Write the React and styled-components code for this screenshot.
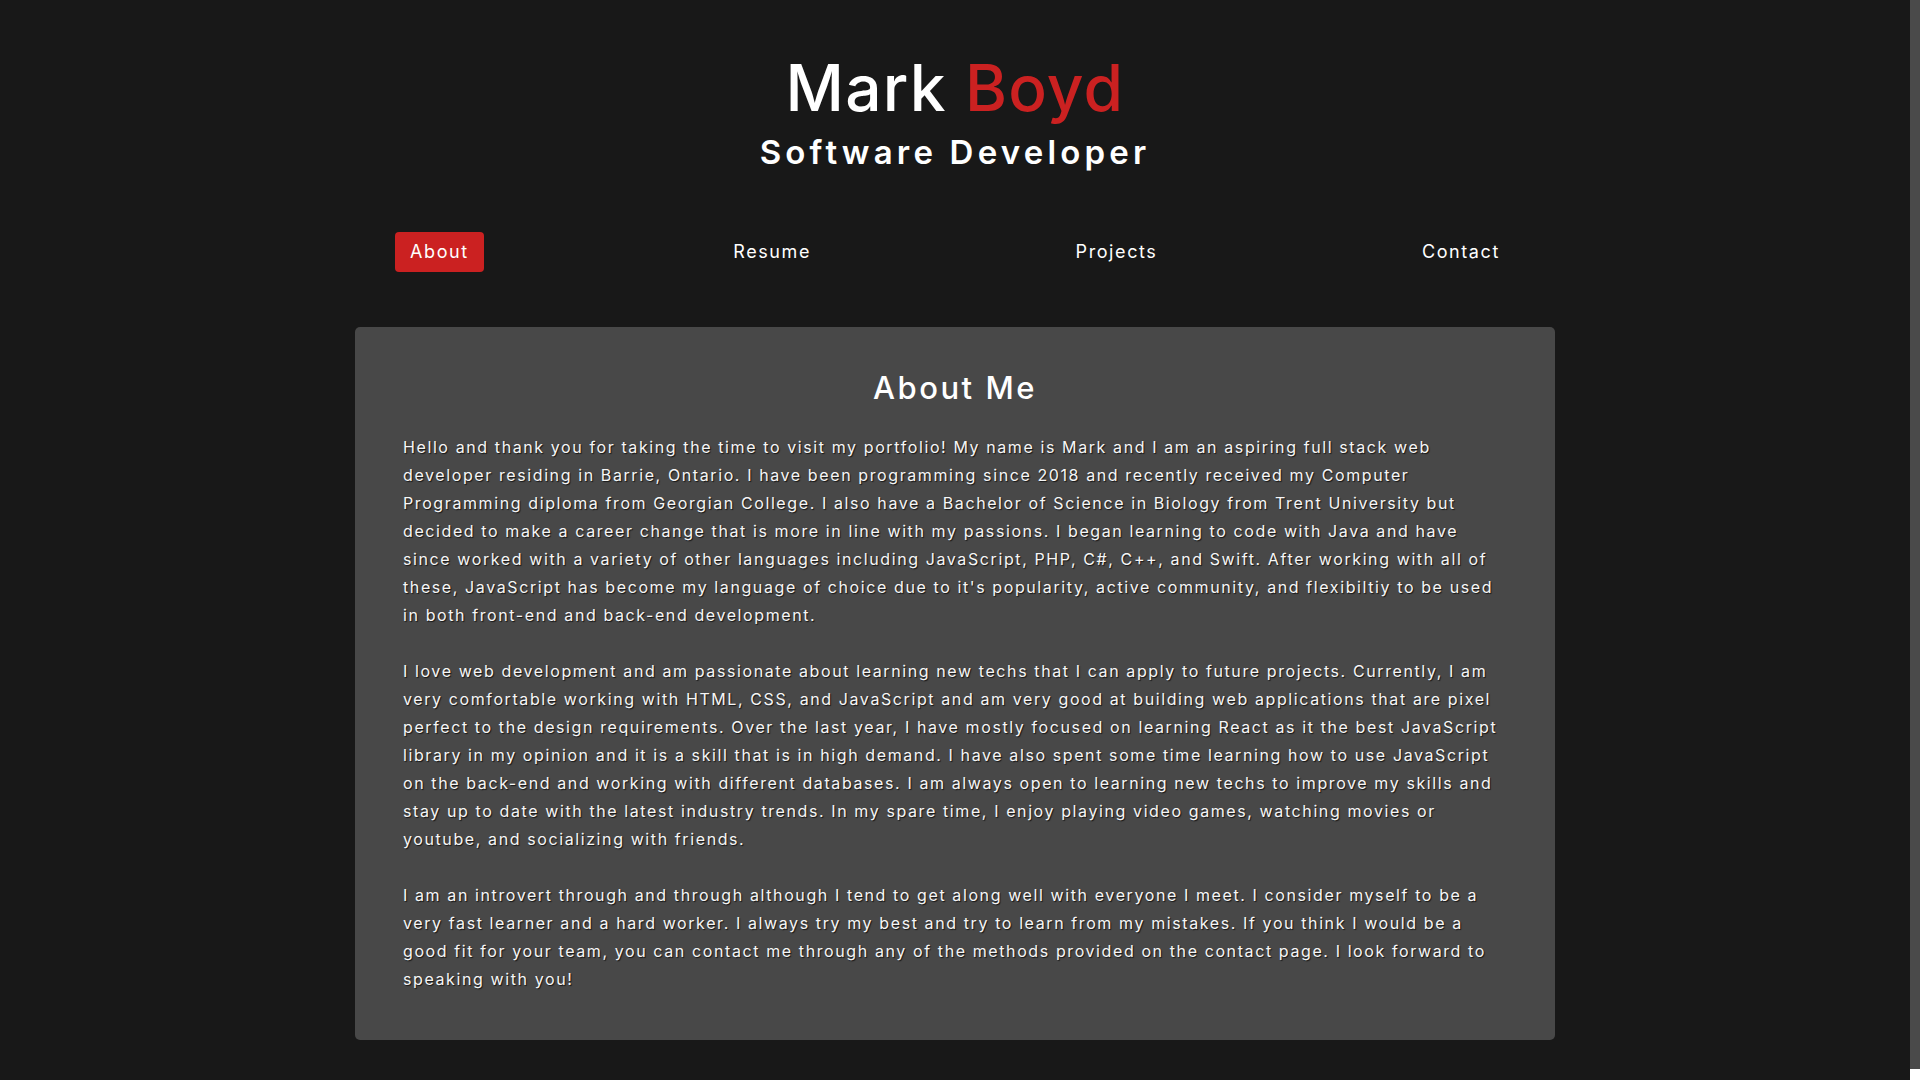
import React, { useState } from "react";
import styled, { createGlobalStyle } from "styled-components";

const GlobalStyle = createGlobalStyle`
  html {
    background-color: #181818;
  }
  body {
    margin: 0;
    background-color: #181818;
    color: #f2f2f2;
    font-family: "Inter", "Open Sans", sans-serif;
  }
`;

const Page = styled.div`
  display: flex;
  flex-direction: column;
  align-items: center;
  padding: 50px 10px 51px 0;
`;

/* the page's scrollbar, drawn since the headless browser hides it */
const ScrollTrack = styled.div`
  position: fixed;
  top: 0;
  right: 0;
  width: 10px;
  height: 100vh;
  background-color: #ffffff;
  div {
    height: 1069px;
    background-color: #4a4a4a;
  }
`;

const Header = styled.header`
  display: flex;
  flex-direction: column;
  align-items: center;
  gap: 6px;
`;

const Name = styled.h1`
  margin: 0;
  font-size: 64px;
  line-height: 1.2;
  font-weight: 500;
  letter-spacing: 1.2px;
  color: #ffffff;
  span {
    color: #cb2121;
  }
`;

const Title = styled.h2`
  margin: 0;
  font-size: 33px;
  line-height: 38px;
  font-weight: 600;
  letter-spacing: 4.2px;
  color: #ffffff;
`;

const Nav = styled.nav`
  width: 1120px;
  margin-top: 61px;
  display: flex;
  justify-content: space-between;
  align-items: center;
`;

const NavLink = styled.a`
  display: block;
  padding: 8px 15px;
  font-size: 18px;
  line-height: 24px;
  letter-spacing: 1.6px;
  color: #ffffff;
  text-decoration: none;
  border-radius: 4px;
  cursor: pointer;
  background-color: ${(p) => (p.$active ? "#cb2121" : "transparent")};
`;

const Card = styled.section`
  width: 1200px;
  box-sizing: border-box;
  margin-top: 55px;
  padding: 43px 48px 47px;
  background-color: #484848;
  border-radius: 5px;
`;

const Heading = styled.h3`
  margin: 0 0 27px;
  text-align: center;
  font-size: 31px;
  line-height: 36px;
  font-weight: 500;
  letter-spacing: 2.5px;
  color: #ffffff;
`;

const Paragraph = styled.p`
  margin: 0 0 28px;
  font-size: 16px;
  line-height: 28px;
  letter-spacing: 1.6px;
  color: #f6f6f6;
  text-shadow: 1px 1px 1px rgba(0, 0, 0, 0.7);
  &:last-child {
    margin-bottom: 0;
  }
`;

const links = ["About", "Resume", "Projects", "Contact"];

const paragraphs = [
  "Hello and thank you for taking the time to visit my portfolio! My name is Mark and I am an aspiring full stack web developer residing in Barrie, Ontario. I have been programming since 2018 and recently received my Computer Programming diploma from Georgian College. I also have a Bachelor of Science in Biology from Trent University but decided to make a career change that is more in line with my passions. I began learning to code with Java and have since worked with a variety of other languages including JavaScript, PHP, C#, C++, and Swift. After working with all of these, JavaScript has become my language of choice due to it's popularity, active community, and flexibiltiy to be used in both front-end and back-end development.",
  "I love web development and am passionate about learning new techs that I can apply to future projects. Currently, I am very comfortable working with HTML, CSS, and JavaScript and am very good at building web applications that are pixel perfect to the design requirements. Over the last year, I have mostly focused on learning React as it the best JavaScript library in my opinion and it is a skill that is in high demand. I have also spent some time learning how to use JavaScript on the back-end and working with different databases. I am always open to learning new techs to improve my skills and stay up to date with the latest industry trends. In my spare time, I enjoy playing video games, watching movies or youtube, and socializing with friends.",
  "I am an introvert through and through although I tend to get along well with everyone I meet. I consider myself to be a very fast learner and a hard worker. I always try my best and try to learn from my mistakes. If you think I would be a good fit for your team, you can contact me through any of the methods provided on the contact page. I look forward to speaking with you!",
];

const App = () => {
  const [active, setActive] = useState("About");

  return (
    <>
      <GlobalStyle />
      <Page>
        <Header>
          <Name>
            Mark <span>Boyd</span>
          </Name>
          <Title>Software Developer</Title>
        </Header>
        <Nav>
          {links.map((link) => (
            <NavLink
              key={link}
              $active={active === link}
              onClick={() => setActive(link)}
            >
              {link}
            </NavLink>
          ))}
        </Nav>
        <Card>
          <Heading>About Me</Heading>
          {paragraphs.map((text, i) => (
            <Paragraph key={i}>{text}</Paragraph>
          ))}
        </Card>
      </Page>
      <ScrollTrack>
        <div />
      </ScrollTrack>
    </>
  );
};

export default App;
